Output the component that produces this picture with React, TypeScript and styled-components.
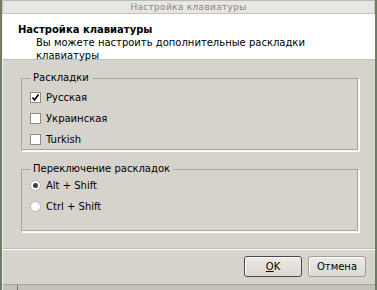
import React from "react";
import styled, { createGlobalStyle } from "styled-components";

const Global = createGlobalStyle`
  html, body { margin: 0; padding: 0; background: #6f7c64; }
  body { font-family: "DejaVu Sans", sans-serif; font-size: 10px; color: #000; }
  #root { width: 377px; height: 290px; }
`;

const Window = styled.div`
  width: 377px;
  height: 290px;
  box-sizing: border-box;
  padding-left: 2px;
  padding-right: 2px;
  display: flex;
  flex-direction: column;
  background: #6f7c64;
`;

const TitleBar = styled.div`
  height: 14px;
  flex: none;
  box-sizing: border-box;
  background: #e8e6e2;
  border: 1px solid #c4c0ba;
  border-top-color: #bdb9b3;
  color: #8a8781;
  font-size: 9px;
  display: flex;
  align-items: center;
  justify-content: center;
  letter-spacing: 0.3px;
`;

const Frame = styled.div`
  flex: 1;
  display: flex;
  flex-direction: column;
  background: #d6d2cc;
  border-left: 1px solid #f2f0ec;
`;

const Header = styled.div`
  background: #fff;
  height: 46px;
  flex: none;
  box-sizing: border-box;
  padding: 9px 0 0 15px;
  border-bottom: 1px solid #c0bcb6;
`;

const HeaderTitle = styled.div`
  font-weight: bold;
  font-size: 10px;
  line-height: 13px;
`;

const HeaderSub = styled.div`
  padding-left: 18px;
  font-size: 10px;
  line-height: 13px;
`;

const Body = styled.div`
  flex: 1;
  display: flex;
  flex-direction: column;
  padding: 12px 16px 0 18px;
  gap: 12px;
`;

const Group = styled.fieldset<{ h: number; pad: number }>`
  margin: 0;
  padding: ${(p) => p.pad}px 8px 0 8px;
  border: 1px solid #f8f7f5;
  border-top-color: #a8a49e;
  border-left-color: #a8a49e;
  box-shadow: inset -1px -1px 0 #a8a49e, 1px 1px 0 #fff;
  height: ${(p) => p.h}px;
  box-sizing: border-box;
  display: flex;
  flex-direction: column;
  gap: 7px;
`;

const Legend = styled.legend`
  padding: 0 3px;
  margin-left: 0;
  font-size: 10px;
  line-height: 12px;
`;

const Option = styled.label`
  display: flex;
  align-items: center;
  gap: 5px;
  height: 14px;
`;

const Box = styled.span`
  width: 11px;
  height: 11px;
  box-sizing: border-box;
  background: #fff;
  border: 1px solid #8e8a84;
  display: flex;
  align-items: center;
  justify-content: center;
`;

const Radio = styled.span<{ on?: boolean }>`
  width: 11px;
  height: 11px;
  box-sizing: border-box;
  border-radius: 50%;
  background: #fff;
  border: 1px solid #b8b4ae;
  display: flex;
  align-items: center;
  justify-content: center;
  &::after {
    content: "";
    display: ${(p) => (p.on ? "block" : "none")};
    width: 5px;
    height: 5px;
    border-radius: 50%;
    background: #3c3e44;
  }
`;

const Separator = styled.div`
  margin-top: auto;
  border-top: 1px solid #bfbbb5;
  border-bottom: 1px solid #fff;
`;

const Buttons = styled.div`
  display: flex;
  justify-content: flex-end;
  gap: 6px;
  padding: 6px 9px 0 0;
  height: 34px;
  flex: none;
  box-sizing: border-box;
`;

const Button = styled.button<{ def?: boolean }>`
  width: 58px;
  height: 21px;
  font-family: "DejaVu Sans", sans-serif;
  font-size: 10px;
  color: #000;
  background: linear-gradient(#eceae6, #dcd8d2);
  border: 1px solid ${(p) => (p.def ? "#4a4844" : "#a09c96")};
  border-radius: 3px;
  padding: 0;
  box-shadow: inset 1px 1px 0 #fff;
`;

const Bottom = styled.div`
  height: 6px;
  flex: none;
  box-sizing: border-box;
  background: #c4c0ba;
  border-top: 1px solid #a6a29c;
  display: flex;
`;

const Grip = styled.div`
  width: 14px;
  border-right: 1px solid #7a766f;
`;

export default function App() {
  return (
    <>
      <Global />
      <Window>
        <TitleBar>Настройка клавиатуры</TitleBar>
        <Frame>
          <Header>
            <HeaderTitle>Настройка клавиатуры</HeaderTitle>
            <HeaderSub>Вы можете настроить дополнительные раскладки</HeaderSub>
            <HeaderSub>клавиатуры</HeaderSub>
          </Header>
          <Body>
            <Group h={79} pad={6}>
              <Legend>Раскладки</Legend>
              <Option>
                <Box>
                  <svg width="9" height="9" viewBox="0 0 9 9">
                    <path d="M1.5 4.5 L3.5 7 L7.5 1.5" stroke="#000" strokeWidth="1.6" fill="none" />
                  </svg>
                </Box>
                Русская
              </Option>
              <Option>
                <Box />
                Украинская
              </Option>
              <Option>
                <Box />
                Turkish
              </Option>
            </Group>
            <Group h={69} pad={3}>
              <Legend>Переключение раскладок</Legend>
              <Option>
                <Radio on />
                Alt + Shift
              </Option>
              <Option>
                <Radio />
                Ctrl + Shift
              </Option>
            </Group>
          </Body>
          <Separator />
          <Buttons>
            <Button def>
              <u>O</u>K
            </Button>
            <Button>Отмена</Button>
          </Buttons>
          <Bottom>
            <Grip />
          </Bottom>
        </Frame>
      </Window>
    </>
  );
}
